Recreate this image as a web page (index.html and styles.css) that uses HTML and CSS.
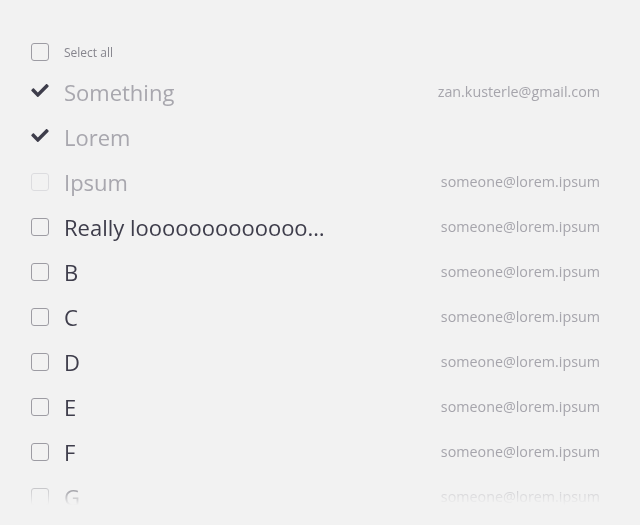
FILE: index.html
```html
<!DOCTYPE html>
<html>
<head>
<meta charset="utf-8">
<link rel="stylesheet" href="styles.css">
</head>
<body>
<div class="list">
  <div class="head">
    <span class="box"></span>
    <span class="select-all">Select all</span>
  </div>
  <div class="row checked">
    <span class="check"><svg viewBox="0 65 512 382" width="18" height="13"><path d="M173.9 439.4l-166.4-166.4c-10-10-10-26.2 0-36.2l36.2-36.2c10-10 26.2-10 36.2 0L192 312.7 432.1 72.6c10-10 26.2-10 36.2 0l36.2 36.2c10 10 10 26.2 0 36.2l-294.4 294.4c-10 10-26.2 10-36.2 0z"/></svg></span>
    <span class="name">Something</span>
    <span class="email">zan.kusterle@gmail.com</span>
  </div>
  <div class="row checked">
    <span class="check"><svg viewBox="0 65 512 382" width="18" height="13"><path d="M173.9 439.4l-166.4-166.4c-10-10-10-26.2 0-36.2l36.2-36.2c10-10 26.2-10 36.2 0L192 312.7 432.1 72.6c10-10 26.2-10 36.2 0l36.2 36.2c10 10 10 26.2 0 36.2l-294.4 294.4c-10 10-26.2 10-36.2 0z"/></svg></span>
    <span class="name">Lorem</span>
    <span class="email"></span>
  </div>
  <div class="row disabled">
    <span class="box"></span>
    <span class="name">Ipsum</span>
    <span class="email">someone@lorem.ipsum</span>
  </div>
  <div class="row">
    <span class="box"></span>
    <span class="name">Really looooooooooooo…</span>
    <span class="email">someone@lorem.ipsum</span>
  </div>
  <div class="row">
    <span class="box"></span>
    <span class="name">B</span>
    <span class="email">someone@lorem.ipsum</span>
  </div>
  <div class="row">
    <span class="box"></span>
    <span class="name">C</span>
    <span class="email">someone@lorem.ipsum</span>
  </div>
  <div class="row">
    <span class="box"></span>
    <span class="name">D</span>
    <span class="email">someone@lorem.ipsum</span>
  </div>
  <div class="row">
    <span class="box"></span>
    <span class="name">E</span>
    <span class="email">someone@lorem.ipsum</span>
  </div>
  <div class="row">
    <span class="box"></span>
    <span class="name">F</span>
    <span class="email">someone@lorem.ipsum</span>
  </div>
  <div class="row">
    <span class="box"></span>
    <span class="name">G</span>
    <span class="email">someone@lorem.ipsum</span>
  </div>
</div>
</body>
</html>
```

FILE: styles.css
```css
html, body {
  margin: 0;
  padding: 0;
  background: #f2f2f2;
  font-family: "Open Sans", "DejaVu Sans", sans-serif;
}

body {
  padding-top: 35px;
}

.list {
  height: 470px;
  overflow: hidden;
  padding: 0 40px 0 31px;
  -webkit-mask-image: linear-gradient(to bottom, #000 calc(100% - 34px), transparent 100%);
  mask-image: linear-gradient(to bottom, #000 calc(100% - 34px), transparent 100%);
}

.head,
.row {
  display: flex;
  align-items: center;
}

.head {
  height: 34px;
}

.row {
  height: 45px;
}

.box {
  box-sizing: border-box;
  width: 18px;
  height: 18px;
  border: 1px solid #9d9ca3;
  border-radius: 3px;
  flex: none;
}

.check {
  width: 18px;
  height: 18px;
  flex: none;
  display: flex;
  align-items: center;
  justify-content: center;
  margin-top: -3px;
}

.check svg {
  fill: #3e3d4b;
  display: block;
}

.select-all {
  margin-left: 15px;
  font-size: 12px;
  color: #86858d;
}

.name {
  margin-left: 15px;
  font-size: 22px;
  color: #3e3d4b;
  white-space: nowrap;
}

.email {
  margin-left: auto;
  font-size: 14.3px;
  color: #a6a5ac;
}

.checked .name {
  color: #a8a7ae;
}

.disabled .box {
  border-color: #dcdcdf;
}

.disabled .name {
  color: #a8a7ae;
}
```
